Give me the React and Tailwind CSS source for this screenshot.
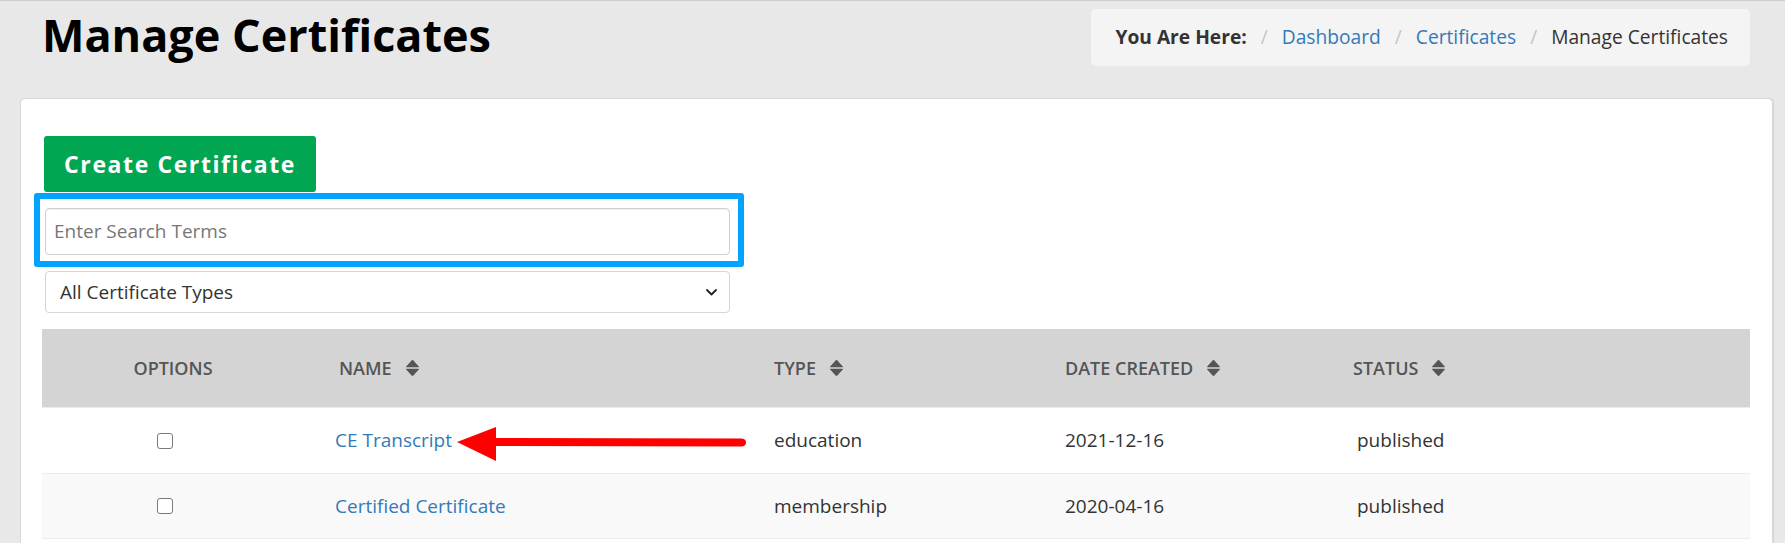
import React from 'react';

const font = { fontFamily: '"Open Sans", "Liberation Sans", sans-serif' };

function SortIcon() {
  return (
    <svg width="15" height="18" viewBox="0 0 15 18" className="ml-[13px] shrink-0">
      <path d="M1.2 7.6 L6.6 1.4 Q7.5 0.5 8.4 1.4 L13.8 7.6 Q14.3 8.3 13.4 8.3 L1.6 8.3 Q0.7 8.3 1.2 7.6 Z" fill="#555" />
      <path d="M1.2 10.4 L6.6 16.6 Q7.5 17.5 8.4 16.6 L13.8 10.4 Q14.3 9.7 13.4 9.7 L1.6 9.7 Q0.7 9.7 1.2 10.4 Z" fill="#555" />
    </svg>
  );
}

const rows = [
  { name: 'CE Transcript', type: 'education', date: '2021-12-16', status: 'published', bg: 'bg-white' },
  { name: 'Certified Certificate', type: 'membership', date: '2020-04-16', status: 'published', bg: 'bg-[#f9f9f9]' },
];

export default function App() {
  return (
    <div className="h-[543px] overflow-hidden bg-[#e8e8e8] border-t border-[#cdcdcd]" style={font}>
      {/* Page header */}
      <div className="h-[97px] flex items-start justify-between pl-[42px] pr-[35px] pt-[8px]">
        <h1 className="mt-[2px] text-[45px] leading-[48px] font-bold text-black">
          Manage Certificates
        </h1>
        <div className="h-[57px] flex items-center gap-[14px] pl-[24px] pr-[22px] bg-[#f4f4f4] rounded-[5px] text-[19.2px] text-[#333]">
          <span className="font-bold">You Are Here:</span>
          <span className="text-[#c4c4c4]">/</span>
          <span className="text-[#337ab7]">Dashboard</span>
          <span className="text-[#c4c4c4]">/</span>
          <span className="text-[#337ab7]">Certificates</span>
          <span className="text-[#c4c4c4]">/</span>
          <span>Manage Certificates</span>
        </div>
      </div>

      {/* Card */}
      <div className="relative ml-[20px] mr-[12px] bg-white border border-[#d9d9d9] rounded-[5px] pt-[37px] pl-[23px] pr-[22px] pb-8 shadow-[1px_0_1px_rgba(0,0,0,0.08)]">
        <button className="h-[56px] w-[272px] bg-[#00a651] rounded-[3px] text-white text-[23px] font-bold tracking-[1.6px]">
          Create Certificate
        </button>

        <div className="mt-[16px] ml-px w-[685px] h-[47px] border border-[#cfcfcf] rounded-[4px] flex items-center pl-[8px] text-[19px] text-[#777] shadow-[inset_0_1px_1px_rgba(0,0,0,0.06)]">
          Enter Search Terms
        </div>

        <div className="mt-[16px] ml-px w-[685px] h-[42px] border border-[#d6d6d6] rounded-[4px] flex items-center justify-between pl-[14px] pr-[12px] text-[19px] text-[#333]">
          <span>All Certificate Types</span>
          <svg width="11" height="7" viewBox="0 0 11 7">
            <path d="M1 1 L5.5 5.5 L10 1" fill="none" stroke="#222" strokeWidth="1.8" strokeLinecap="round" strokeLinejoin="round" />
          </svg>
        </div>

        {/* Table */}
        <div className="mt-[16px] -ml-[2px]">
          <div className="grid grid-cols-[260px_439px_291px_288px_1fr] h-[78px] bg-[#d4d4d4] text-[18px] font-semibold text-[#555] uppercase">
            <div className="flex items-center justify-center pl-[2px]">Options</div>
            <div className="flex items-center pl-[37px]">Name<SortIcon /></div>
            <div className="flex items-center pl-[33px]">Type<SortIcon /></div>
            <div className="flex items-center pl-[33px]">Date Created<SortIcon /></div>
            <div className="flex items-center pl-[33px]">Status<SortIcon /></div>
          </div>
          {rows.map((r, i) => (
            <div
              key={r.name}
              className={`grid grid-cols-[260px_439px_291px_288px_1fr] h-[66px] text-[19px] text-[#333] border-t border-[#ececec] ${r.bg} ${i === rows.length - 1 ? 'border-b' : ''}`}
            >
              <div className="flex items-center justify-center pr-[14px]">
                <div className="w-[16px] h-[16px] border-[1.5px] border-[#7a7a7a] rounded-[3px] bg-white" />
              </div>
              <div className="flex items-center pl-[33px] text-[#337ab7]">{r.name}</div>
              <div className="flex items-center pl-[33px]">{r.type}</div>
              <div className="flex items-center pl-[33px]">{r.date}</div>
              <div className="flex items-center pl-[37px]">{r.status}</div>
            </div>
          ))}
        </div>

        {/* Annotation: blue highlight around the search box */}
        <div className="absolute left-[13px] top-[94px] w-[710px] h-[74px] border-[6px] border-[#00a3ff] rounded-[3px] pointer-events-none" />

        {/* Annotation: red arrow pointing to CE Transcript */}
        <svg className="absolute left-[435px] top-[327px] pointer-events-none" width="292" height="36" viewBox="0 0 292 36">
          <path d="M36 12 L286 12.5 Q290 13 290 16.5 Q290 20 286 20.5 L36 20 Z" fill="#ff0000" />
          <path d="M1 16 L40 1 L40 35 Z" fill="#ff0000" />
        </svg>
      </div>
    </div>
  );
}
